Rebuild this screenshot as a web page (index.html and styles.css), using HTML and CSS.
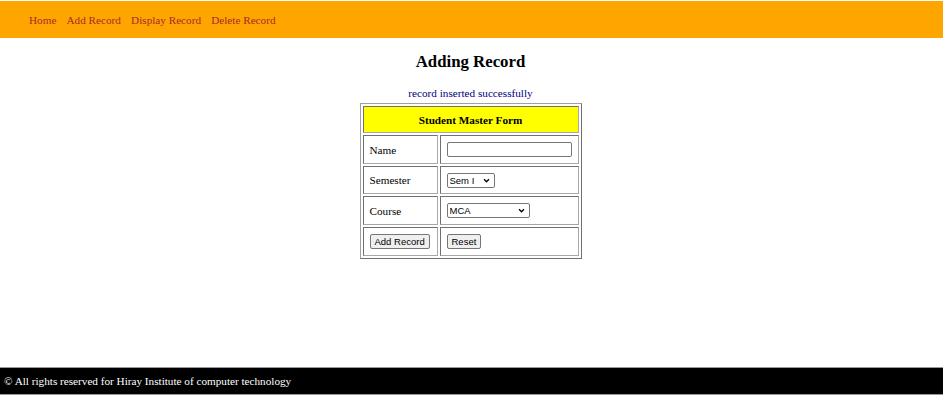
FILE: index.html
```html
<!DOCTYPE html>
<html>
<head>
<meta charset="utf-8">
<title>Adding Record</title>
<link rel="stylesheet" href="styles.css">
</head>
<body>
<div class="page">
  <header class="nav">
    <a href="#">Home</a>
    <a href="#">Add Record</a>
    <a href="#">Display Record</a>
    <a href="#">Delete Record</a>
  </header>
  <main class="main">
    <h2 class="title">Adding Record</h2>
    <p class="msg">record inserted successfully</p>
    <table class="form">
      <tr><th colspan="2" class="head">Student Master Form</th></tr>
      <tr class="r1"><td class="lbl">Name</td><td class="val"><input type="text" class="txt"></td></tr>
      <tr class="r2"><td class="lbl">Semester</td><td class="val"><select class="sel sem"><option>Sem I</option></select></td></tr>
      <tr class="r3"><td class="lbl">Course</td><td class="val"><select class="sel course"><option>MCA</option></select></td></tr>
      <tr class="r4"><td class="lbl"><button class="btn">Add Record</button></td><td class="val"><button class="btn">Reset</button></td></tr>
    </table>
  </main>
  <footer class="foot">© All rights reserved for Hiray Institute of computer technology</footer>
</div>
</body>
</html>
```
FILE: styles.css
```css
html, body {
  margin: 0;
  padding: 0;
  background: #fff;
}
body {
  font-family: "Liberation Serif", "Times New Roman", serif;
  font-size: 11.2px;
  color: #000;
}
.page {
  display: flex;
  flex-direction: column;
  height: 398px;
}
.nav {
  margin-top: 1px;
  height: 37px;
  background: #ffa500;
  display: flex;
  align-items: center;
  gap: 10.2px;
  padding-left: 29px;
}
.nav a {
  color: #a52a2a;
  text-decoration: none;
  font-size: 11.2px;
}
.main {
  flex: 1;
  display: flex;
  flex-direction: column;
  align-items: center;
  padding-right: 2px;
}
.title {
  margin: 14px 0 0;
  font-size: 16.8px;
  line-height: 20px;
  font-weight: bold;
}
.msg {
  margin: 15px 0 0;
  color: #000080;
  line-height: 13px;
}
.form {
  margin-top: 3px;
  border-collapse: separate;
  border-spacing: 2px;
  border: 1px solid;
  border-color: #a0a0a0 #707070 #707070 #a0a0a0;
}
.form th, .form td {
  border: 1px solid;
  border-color: #707070 #a8a8a8 #a8a8a8 #707070;
  padding: 0 6px;
  vertical-align: middle;
}
.head {
  background: #ffff00;
  height: 25px;
  font-weight: bold;
  font-size: 11.2px;
}
.lbl { width: 61px; text-align: left; }
.val { width: 125px; }
.r1 td { height: 27px; }
.r2 td { height: 26px; }
.r3 td { height: 27px; }
.r4 td { height: 27px; }
.txt {
  box-sizing: border-box;
  width: 125px;
  height: 15px;
  border: 1px solid #767676;
  border-radius: 2px;
  padding: 0 2px;
  margin: 0;
  display: block;
}
.sel {
  -webkit-appearance: none;
  appearance: none;
  box-sizing: border-box;
  height: 15px;
  border: 1px solid #767676;
  border-radius: 2px;
  background-color: #fff;
  background-image: url("data:image/svg+xml,%3Csvg xmlns='http://www.w3.org/2000/svg' width='8' height='6' viewBox='0 0 8 6'%3E%3Cpath d='M1 1.5 L4 4.5 L7 1.5' fill='none' stroke='%23000' stroke-width='1.6'/%3E%3C/svg%3E");
  background-repeat: no-repeat;
  background-position: right 4px center;
  background-size: 7px 5px;
  font-family: "Liberation Sans", Arial, sans-serif;
  font-size: 9.5px;
  line-height: 13px;
  padding: 0 0 0 2px;
  margin: 0;
  display: block;
  color: #000;
}
.sem { width: 48px; }
.course { width: 83px; }
.btn {
  box-sizing: border-box;
  height: 15px;
  border: 1px solid #767676;
  border-radius: 2px;
  background: #efefef;
  font-family: "Liberation Sans", Arial, sans-serif;
  font-size: 9.5px;
  padding: 0 4px;
  margin: 0;
  display: block;
  color: #000;
}
.foot {
  margin-bottom: 3px;
  height: 26px;
  background: #000;
  color: #fff;
  border-top: 1px solid #999;
  border-bottom: 1px solid #999;
  display: flex;
  align-items: center;
  padding-left: 4px;
  font-size: 11.2px;
}
```
